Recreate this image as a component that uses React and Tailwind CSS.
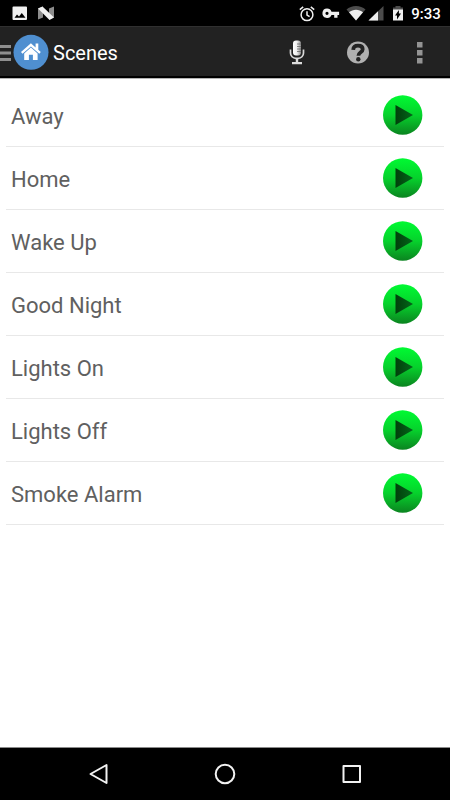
import { useState } from 'react';

const scenes = ['Away', 'Home', 'Wake Up', 'Good Night', 'Lights On', 'Lights Off', 'Smoke Alarm'];

// --- STATUS BAR ---
function StatusBar() {
  return (
    <div className="h-[26px] bg-black flex items-center justify-between pt-0.5 pl-3 pr-[9px] text-white">
      <div className="flex items-center gap-[10px]">
        <svg className="w-4 h-4" viewBox="0 0 16 16">
          <path fill="#f0f0f0" d="M1.500.500h12.500a1 1 0 0 1 1 1v11.500a1 1 0 0 1-1 1H1.500a1 1 0 0 1-1-1V1.500a1 1 0 0 1 1-1z" />
          <path fill="#000" d="M2.500 11.800 5 8.500l2 2.100L9.800 7l3.700 4.800z" />
        </svg>
        <svg className="w-4 h-4" viewBox="0 0 16 16">
          <path fill="#8c8c8c" d="M0 2.500 5 .500v11L0 13.500zM11 2.500l5-2v11l-5 2z" />
          <path fill="#f0f0f0" d="M0 2.500 4.500.500 16 11.500l-4.500 2.500z" />
        </svg>
      </div>
      <div className="flex items-center">
        <svg className="w-4 h-4 mr-[7px]" viewBox="0 0 16 16" fill="none" stroke="#f0f0f0" strokeWidth="1.500">
          <circle cx="8" cy="8.700" r="5.900" />
          <path d="M8 5.300v3.800l2.600 1.600M.8 3.700 4.200.9M15.200 3.700 11.800.9" />
        </svg>
        <svg className="w-[18px] h-4 mr-[6px]" viewBox="0 0 18 16">
          <path
            fill="#f0f0f0"
            fillRule="evenodd"
            d="M5 2.600a4.700 4.700 0 0 1 4.500 3.200h7.600V9h-1.600v2.800h-3.300V9H9.500A4.700 4.700 0 1 1 5 2.600zm0 3.100a1.600 1.600 0 1 0 0 3.200 1.600 1.600 0 0 0 0-3.200z"
          />
        </svg>
        <svg className="w-5 h-4 mr-0.5" viewBox="0 0 20 16">
          <path fill="#4c4c4c" d="M10 14.500.500 3.500C3 1.500 6.300.100 10 .1s7 1.400 9.500 3.400z" />
          <path fill="#f0f0f0" d="M10 14.500 3 6.300C5 4.500 7.300 3.700 10 3.700s5 .8 7 2.600z" />
        </svg>
        <svg className="w-4 h-4 mr-2" viewBox="0 0 16 16">
          <path fill="#4c4c4c" d="M15.500 0v14.500H.500z" />
          <path fill="#f0f0f0" d="M10 5.300v9.200H.500z" />
        </svg>
        <svg className="w-3 h-4 mr-[7px]" viewBox="0 0 12 16">
          <path fill="#4c4c4c" d="M1 2.500V1.500h2.500V0h5v1.500H11V4H1z" />
          <path fill="#f0f0f0" d="M1 3.500h10v11H1z" />
          <path fill="#000" d="M6.900 4v3.500H9l-4 6V9.500H3z" />
        </svg>
        <span className="w-[30px] text-center text-[15px] leading-5 font-medium whitespace-nowrap">9:33</span>
      </div>
    </div>
  );
}

// --- APP BAR ---
function AppBar({ onMenu }) {
  return (
    <header className="h-[52px] bg-[#222222] border-t border-t-[#303030] border-b-2 border-b-black flex items-center justify-between pr-5">
      <button type="button" aria-label="Open navigation" onClick={onMenu} className="flex items-center">
        <svg className="w-[13px] h-[18px]" viewBox="0 0 13 18" fill="#8f8f8f">
          <path d="M0 2h11v3H0zM0 8.500h11v3H0zM0 15h11v3H0z" />
        </svg>
        <svg className="w-9 h-9" viewBox="0 0 36 36">
          <circle cx="18" cy="18.300" r="17.500" fill="#4f8fd0" />
          <path fill="#fff" d="M17.900 9.300 22.600 13.400V9.500h2.700v6.200l2.500 2.200-1.500 1.900-8.400-7.300-8.400 7.300L8 17.900z" />
          <path fill="#fff" d="M17.900 13.600 24.600 19.500V26h-4.700v-5.200h-4V26h-4.700v-6.500z" />
        </svg>
      </button>
      <h1 className="grow pt-0.5 pl-1 text-xl leading-6 text-white">Scenes</h1>
      <div className="flex items-center">
        <button type="button" aria-label="Voice command" className="mr-[41px]">
          <svg className="w-4 h-[26px]" viewBox="0 0 16 26">
            <defs>
              <linearGradient id="mic" x1="0" x2="1" y1="0" y2="0">
                <stop offset="0" stopColor="#fff" />
                <stop offset="0.500" stopColor="#eee" />
                <stop offset="1" stopColor="#8a8a8a" />
              </linearGradient>
            </defs>
            <rect x="4" y="1.500" width="8" height="15" rx="3" fill="url(#mic)" />
            <path stroke="#666" strokeWidth="0.800" d="M8 5h4M8 7.500h4M8 10h4M8 12.500h4" />
            <path fill="none" stroke="#d8d8d8" strokeWidth="1.700" d="M1.500 10.500V14a5.300 5.300 0 0 0 5.300 5.300h2.400a5.300 5.300 0 0 0 5.300-5.300v-3.500" />
            <path fill="#dcdcdc" d="M6.800 19h2.400v4H13v2.300H3V23h3.800z" />
          </svg>
        </button>
        <button type="button" aria-label="Help" className="mr-10">
          <svg className="w-6 h-6" viewBox="0 0 24 24">
            <circle cx="12" cy="12.500" r="11" fill="#b0b0b0" />
            <path fill="none" stroke="#222" strokeWidth="3.800" d="M7.200 9.800C7.400 7 9.300 5.700 12 5.700c2.800 0 4.700 1.300 4.700 3.500 0 3.100-4.300 3-4.300 6.600" />
            <circle cx="12.300" cy="19.300" r="2.200" fill="#222" />
          </svg>
        </button>
        <button type="button" aria-label="More options">
          <svg className="w-5 h-6" viewBox="0 0 20 24" fill="#949494">
            <path d="M7 2h5.500v5.500H7zM7 10h5.500v5.500H7zM7 18h5.500v5.500H7z" />
          </svg>
        </button>
      </div>
    </header>
  );
}

function SceneRow({ name, onRun }) {
  return (
    <li className="h-[63px] border-b border-[#e8e8e8] flex items-center justify-between pl-[5px] pr-[21px]">
      <span className="pt-1 text-[22px] leading-7 text-[#606060]">{name}</span>
      <button type="button" aria-label={`Run ${name}`} onClick={() => onRun(name)}>
        <svg className="w-10 h-10" viewBox="0 0 40 40">
          <defs>
            <linearGradient id="play-disc" x1="0" x2="0" y1="0" y2="1">
              <stop offset="0" stopColor="#00fa32" />
              <stop offset="0.500" stopColor="#06d22c" />
              <stop offset="1" stopColor="#0b8420" />
            </linearGradient>
            <linearGradient id="play-arrow" x1="0" x2="1" y1="0" y2="0">
              <stop offset="0" stopColor="#013f0b" />
              <stop offset="1" stopColor="#04651a" />
            </linearGradient>
          </defs>
          <circle cx="19.700" cy="20" r="19.700" fill="url(#play-disc)" />
          <path fill="url(#play-arrow)" d="M12.500 10 30 20 12.500 30z" />
        </svg>
      </button>
    </li>
  );
}

// --- SYSTEM NAVIGATION ---
function NavBar() {
  return (
    <nav className="h-[53px] bg-black border-t border-[#8a8a8a] flex items-center justify-around px-9">
      <button type="button" aria-label="Back">
        <svg className="w-6 h-6" viewBox="0 0 24 24" fill="none" stroke="#f2f2f2" strokeWidth="2" strokeLinejoin="round">
          <path d="M19.500 3v18L3.500 12z" />
        </svg>
      </button>
      <button type="button" aria-label="Home">
        <svg className="w-6 h-6" viewBox="0 0 24 24" fill="none" stroke="#f2f2f2" strokeWidth="2">
          <circle cx="12" cy="12" r="9.300" />
        </svg>
      </button>
      <button type="button" aria-label="Recent apps">
        <svg className="w-6 h-6" viewBox="0 0 24 24" fill="none" stroke="#f2f2f2" strokeWidth="2" strokeLinejoin="round">
          <path d="M4.500 4h16.500v16H4.500z" />
        </svg>
      </button>
    </nav>
  );
}

function App() {
  const [menuOpen, setMenuOpen] = useState(false);
  const [activeScene, setActiveScene] = useState('');

  return (
    <div className="min-h-screen flex flex-col bg-white font-['Roboto',sans-serif]" data-menu={menuOpen} data-scene={activeScene}>
      <StatusBar />
      <AppBar onMenu={() => setMenuOpen(!menuOpen)} />
      <main className="grow px-[6px] pt-[5px] border-t border-[#b5b5b5]">
        <ul>
          {scenes.map((name) => (
            <SceneRow key={name} name={name} onRun={setActiveScene} />
          ))}
        </ul>
      </main>
      <NavBar />
    </div>
  );
}

export default App;
